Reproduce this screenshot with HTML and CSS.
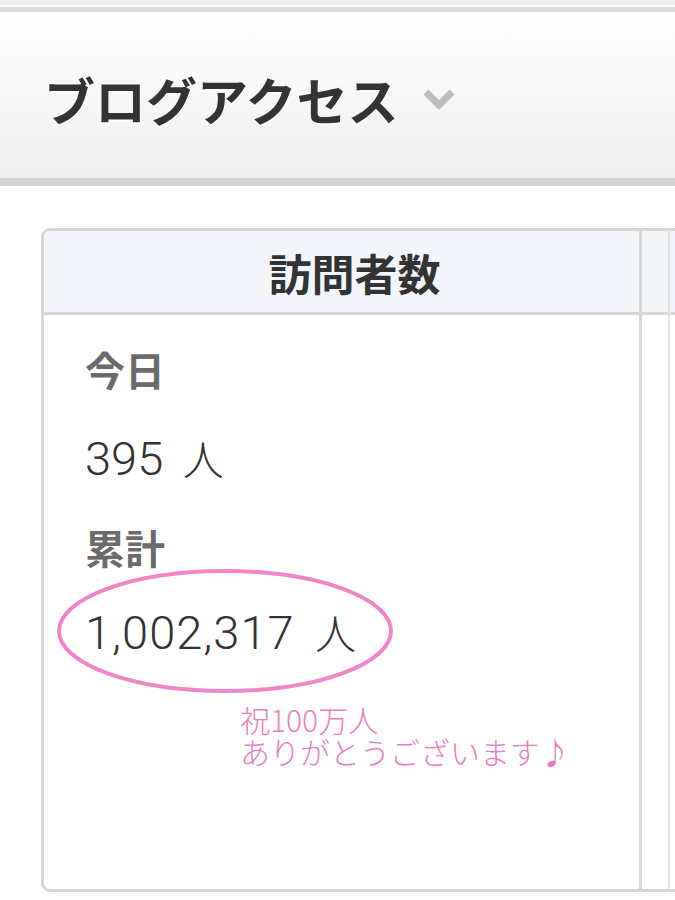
FILE: index.html
```html
<!DOCTYPE html>
<html lang="ja">
<head>
    <meta charset="UTF-8">
    <meta name="viewport" content="width=device-width, initial-scale=1.0">
    <title>ブログアクセス</title>
    <link rel="stylesheet" href="styles.css">
</head>
<body>

    <div class="head-top"></div>
    <div class="head-box">
        <h1 class="title">ブログアクセス</h1>
        <svg class="chevron" width="34" height="24" viewBox="0 0 34 24">
            <polyline points="4,5 17,18 30,5" fill="none" stroke="#bdbdbd" stroke-width="7"/>
        </svg>
    </div>

    <div class="stats">
        <div class="col main">
            <div class="col-head">訪問者数</div>
            <div class="col-body">
                <p class="label">今日</p>
                <p class="num">395 <span class="unit">人</span></p>
                <p class="label">累計</p>
                <div class="total">
                    <p class="num wide">1,002,317 <span class="unit">人</span></p>
                    <svg class="ring" width="340" height="128" viewBox="0 0 340 128">
                        <ellipse cx="170" cy="64" rx="166" ry="60" fill="none" stroke="#f086c6" stroke-width="4"/>
                    </svg>
                </div>
                <p class="note">祝100万人<br>ありがとうございます♪</p>
            </div>
        </div>
        <div class="col side">
            <div class="col-head"></div>
        </div>
        <div class="col rest">
            <div class="col-head"></div>
        </div>
    </div>

</body>
</html>
```

FILE: styles.css
```css
body {
    margin: 0;
    background-color: white;
    font-family: "Noto Sans CJK JP", "Liberation Sans", sans-serif;
    color: #333;
}

.head-top {
    height: 5px;
    background-color: #efefef;
    border-bottom: 2px solid #fff;
}

.head-box {
    height: 166px;
    border-top: 5px solid #dadada;
    border-bottom: 8px solid #d2d2d2;
    background: linear-gradient(#ffffff, #efefef);
    display: flex;
    align-items: center;
    padding-left: 44px;
}

.title {
    margin: 8px 0 0 0;
    font-size: 51px;
    font-weight: bold;
    color: #333;
    text-shadow: 0 2px 0 #fff;
}

.chevron {
    margin: 8px 0 0 24px;
}

.stats {
    display: flex;
    margin: 42px 0 0 41px;
    height: 664px;
}

.col {
    border-top: 3px solid #d7d7d7;
    border-bottom: 3px solid #d7d7d7;
}

.main {
    width: 595px;
    border-left: 3px solid #d7d7d7;
    border-right: 3px solid #d7d7d7;
    border-radius: 9px 0 0 9px;
}

.side {
    width: 26px;
    border-right: 2px solid #e2e2e2;
}

.rest {
    flex: 1;
}

.col-head {
    height: 81px;
    padding-left: 26px;
    background-color: #f2f6fa;
    border-bottom: 3px solid #d7d7d7;
    border-radius: 7px 0 0 0;
    text-align: center;
    line-height: 82px;
    font-size: 43px;
    font-weight: bold;
    color: #333;
}

.side .col-head,
.rest .col-head {
    padding-left: 0;
    border-radius: 0;
}

.col-body {
    padding: 10px 0 0 41px;
}

.col-body p {
    margin: 0;
}

.label {
    line-height: 88px;
    font-size: 40px;
    font-weight: bold;
    color: #6b6b6b;
}

.num {
    line-height: 88px;
    font-family: Roboto, "Liberation Sans", "Noto Sans CJK JP", sans-serif;
    font-size: 47px;
    font-weight: 300;
    color: #333;
}

.wide {
    letter-spacing: 1px;
}

.unit {
    font-family: "Noto Sans CJK JP", sans-serif;
    font-size: 41px;
    font-weight: 300;
    margin-left: 8px;
}

.total {
    position: relative;
    margin-top: -4px;
}

.ring {
    position: absolute;
    left: -30px;
    top: -20px;
}

.note {
    margin: 26px 0 0 155px !important;
    font-size: 30px;
    line-height: 32px;
    font-weight: 300;
    color: #ea7dc2;
}
```
